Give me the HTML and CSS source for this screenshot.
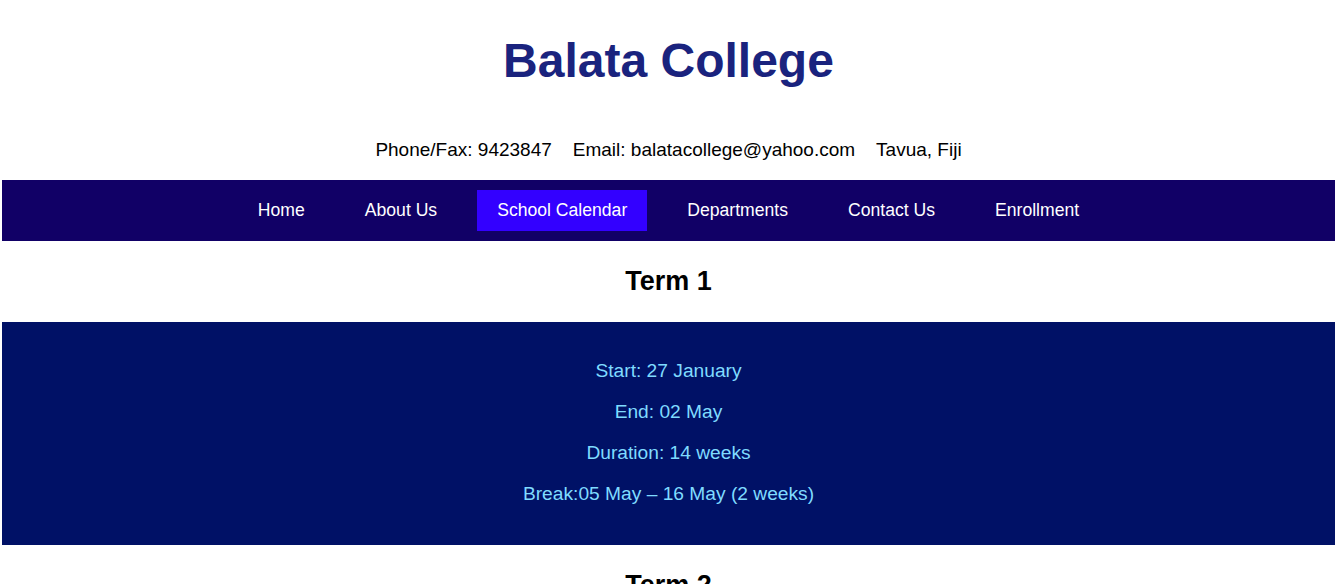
FILE: index.html
```html
<!DOCTYPE html>
<html lang="en">
<head>
<meta charset="utf-8">
<title>Balata College - School Calendar</title>
<link rel="stylesheet" href="styles.css">
</head>
<body>
<header class="site-header">
  <h1 class="site-title">Balata College</h1>
  <p class="contact">
    <span>Phone/Fax: 9423847</span>
    <span>Email: balatacollege@yahoo.com</span>
    <span>Tavua, Fiji</span>
  </p>
</header>
<nav class="main-nav">
  <a href="#" class="nav-link">Home</a>
  <a href="#" class="nav-link">About Us</a>
  <a href="#" class="nav-link active">School Calendar</a>
  <a href="#" class="nav-link">Departments</a>
  <a href="#" class="nav-link">Contact Us</a>
  <a href="#" class="nav-link">Enrollment</a>
</nav>
<main>
  <h2 class="term-title">Term 1</h2>
  <section class="term">
    <p>Start: 27 January</p>
    <p>End: 02 May</p>
    <p>Duration: 14 weeks</p>
    <p>Break:05 May – 16 May (2 weeks)</p>
  </section>
  <h2 class="term-title">Term 2</h2>
  <section class="term">
    <p>Start: 19 May</p>
    <p>End: 22 August</p>
    <p>Duration: 14 weeks</p>
    <p>Break:25 August – 05 September (2 weeks)</p>
  </section>
</main>
</body>
</html>
```
FILE: styles.css
```css
html, body {
  background: #ffffff;
}
body {
  margin: 0 0 0 2px;
  font-family: "Liberation Sans", Arial, sans-serif;
  color: #000000;
}
.site-header {
  text-align: center;
}
.site-title {
  margin: 33px 0 51px;
  font-size: 48px;
  font-weight: bold;
  color: #1a237e;
}
.contact {
  display: flex;
  justify-content: center;
  gap: 21px;
  margin: 0 0 19px;
  font-size: 19px;
  line-height: 22px;
}
.main-nav {
  display: flex;
  justify-content: center;
  gap: 20px;
  padding: 10px 0;
  background: #110066;
}
.nav-link {
  display: block;
  padding: 10px 20px;
  font-size: 17.6px;
  color: #ffffff;
  text-decoration: none;
  line-height: 21px;
}
.nav-link.active {
  background: #3300ff;
}
.term-title {
  margin: 25px 0 25px;
  font-size: 27px;
  font-weight: bold;
  text-align: center;
}
.term {
  padding: 19px 0 21px;
  background: #001166;
  text-align: center;
}
.term p {
  margin: 19px 0;
  font-size: 19.2px;
  line-height: 22px;
  color: #7fdbff;
}
```
